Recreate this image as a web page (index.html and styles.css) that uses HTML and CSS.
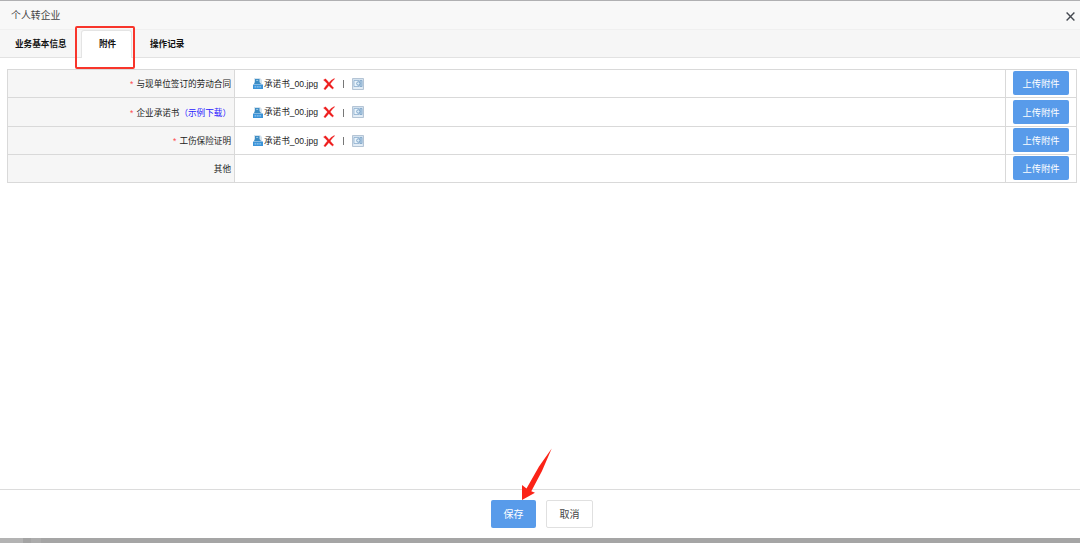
FILE: index.html
```
<!DOCTYPE html>
<html lang="en">
<head>
<meta charset="utf-8">
<title>个人转企业</title>
<link rel="stylesheet" href="styles.css">
</head>
<body>
<svg class="defs" width="0" height="0">
  <symbol id="file" viewBox="0 0 10 11">
    <path d="M1 0h6l2 2v5H1z" fill="#d5e3ee"/>
    <path d="M2 1h4.500v3l1.500 2H1l1-2z" fill="#3b8cc4"/>
    <path d="M3.200 2.400h2" stroke="#b9dcf4" stroke-width=".8"/>
    <path d="M0 6.500h10V11H0z" fill="#3b93d8"/>
    <path d="M1.500 8.800h7" stroke="#8fc6ef" stroke-width="1.200" stroke-dasharray="1.800 .600"/>
  </symbol>
  <symbol id="delete" viewBox="0 0 12 12">
    <path d="M.5 2 2.500.8Q5 3.400 6 4.700 8 1.800 11.300.5L11.600 1Q9 3 7.200 5.900 9 8 10.700 10L9.500 11Q7 9 5.900 7.500 4 10 2.300 11.700L.8 10.900Q2.500 8 4.500 5.900 2.500 3.500.5 2z" fill="#ee1c1c" stroke="#ee1c1c" stroke-width=".3"/>
  </symbol>
  <symbol id="preview" viewBox="0 0 12 12">
    <path d="M.5.500h11v11H.5z" fill="#d3e2ef" stroke="#b4c4d5"/>
    <path d="M2 2.500h5v6H2z" fill="#e9f3fa" stroke="#8fb0cf" stroke-width=".8"/>
    <path d="M8 2.500h2v6H8z" fill="#b5d0e6" stroke="#7fa5c8" stroke-width=".8"/>
    <circle cx="6.300" cy="5.500" r="1.700" fill="#d8ebf7" stroke="#7199c1" stroke-width=".8"/>
    <path d="M1.500 10h9" stroke="#f2f7fb"/>
  </symbol>
</svg>
<div class="dialog">
  <header class="titlebar">
    <span>个人转企业</span>
    <svg class="close" viewBox="0 0 9 9"><path d="M.6.600l7.800 7.800M8.400.600.6 8.400" stroke="#454950" stroke-width="1.400"/></svg>
  </header>
  <nav class="tabs">
    <div class="tab tab-info">业务基本信息</div>
    <div class="tab tab-active">附件<i class="tab-mark"></i></div>
    <div class="tab tab-log">操作记录</div>
  </nav>
  <main class="content">
    <div class="table">
      <div class="label"><b>*</b>与现单位签订的劳动合同</div>
      <div class="files"><svg class="file-icon"><use href="#file"/></svg><span class="name">承诺书_00.jpg</span><svg class="action-icon"><use href="#delete"/></svg><span class="bar"></span><svg class="action-icon"><use href="#preview"/></svg></div>
      <div class="upload"><button class="upload-btn">上传附件</button></div>
      <div class="label"><b>*</b>企业承诺书<a class="sample">（示例下载）</a></div>
      <div class="files"><svg class="file-icon"><use href="#file"/></svg><span class="name">承诺书_00.jpg</span><svg class="action-icon"><use href="#delete"/></svg><span class="bar"></span><svg class="action-icon"><use href="#preview"/></svg></div>
      <div class="upload"><button class="upload-btn">上传附件</button></div>
      <div class="label"><b>*</b>工伤保险证明</div>
      <div class="files"><svg class="file-icon"><use href="#file"/></svg><span class="name">承诺书_00.jpg</span><svg class="action-icon"><use href="#delete"/></svg><span class="bar"></span><svg class="action-icon"><use href="#preview"/></svg></div>
      <div class="upload"><button class="upload-btn">上传附件</button></div>
      <div class="label">其他</div>
      <div class="files"></div>
      <div class="upload"><button class="upload-btn">上传附件</button></div>
    </div>
  </main>
  <footer class="footer">
    <button class="btn save">保存</button>
    <button class="btn cancel">取消</button>
    <svg class="arrow" viewBox="0 0 32 54"><path d="M30.700 1.500 18 19.500 5.500 41.500 1 38V53L14 45.800 10.300 44.300 21 24z" fill="#fb2418"/></svg>
  </footer>
</div>
<div class="backdrop"><span></span><span></span><span></span></div>
</body>
</html>
```
FILE: styles.css
```
* { box-sizing: border-box; }
body {
  margin: 0;
  height: 543px;
  display: flex;
  flex-direction: column;
  overflow: hidden;
  background: #fff;
  color: #222;
  font: 8.6px/12px "Liberation Sans", "Noto Sans CJK SC", sans-serif;
}
button { font-family: inherit; padding: 0; border: 0; white-space: nowrap; }
.defs { position: absolute; }
.dialog {
  height: 538px;
  border-top: 1px solid #b0b0b2;
  display: flex;
  flex-direction: column;
}
.titlebar {
  height: 29px;
  display: flex;
  align-items: center;
  justify-content: space-between;
  padding: 2px 5px 0 11px;
  background: #f8f8f8;
  border-bottom: 1px solid #f0f0f0;
  color: #444;
  font-size: 9.9px;
}
.close { width: 9px; height: 9px; margin-top: 1px; }
.tabs {
  height: 28px;
  display: flex;
  background: #f6f6f6;
  border-bottom: 1px solid #e2e2e2;
  color: #111;
  font-weight: 700;
}
.tab { display: flex; align-items: center; white-space: nowrap; }
.tab-info { width: 81px; padding-left: 15px; }
.tab-active {
  position: relative;
  width: 51px;
  height: 28px;
  padding: 0 0 1px 17px;
  background: #fff;
  border: 1px solid #e4e4e4;
  border-width: 1px 1px 0;
  border-radius: 3px 3px 0 0;
}
.tab-mark {
  position: absolute;
  left: -7px;
  top: -5px;
  width: 60px;
  height: 43px;
  border: 2px solid #f8352b;
  border-radius: 2px;
}
.tab-log { padding-left: 18px; }
.content { flex: 1; padding: 11px 3px 0 7px; }
.table {
  display: grid;
  grid-template-columns: 227px 771px 71px;
  grid-template-rows: 28px 29px 28px 28px;
  width: 1070px;
  height: 114px;
  border: 1px solid #d9d9d9;
  border-width: 1px 0 0 1px;
}
.table > div {
  display: flex;
  align-items: center;
  border: 1px solid #d9d9d9;
  border-width: 0 1px 1px 0;
}
.table .label { justify-content: flex-end; padding: 1px 3px 0 0; background: #f6f6f6; white-space: nowrap; }
.label b { color: #ff4a4a; margin-right: 3px; font-weight: 400; }
.sample { color: #2a20ff; }
.files { padding-left: 18px; }
.file-icon { width: 10px; height: 11px; margin-right: 1px; }
.name { width: 59px; white-space: nowrap; }
.action-icon { width: 12px; height: 12px; }
.bar { width: 1px; height: 8px; margin: 1px 8px 0; background: #777; }
.table .upload { justify-content: center; padding-bottom: 1px; }
.upload-btn {
  width: 56px;
  height: 24px;
  border-radius: 2px;
  background: #589bea;
  color: #fff;
  font-size: 9.3px;
}
.footer {
  position: relative;
  height: 49px;
  display: flex;
  justify-content: center;
  gap: 10px;
  padding: 10px 0 0 4px;
  border-top: 1px solid #dcdcdc;
}
.btn { height: 28px; padding-bottom: 1px; border-radius: 2px; font-size: 10px; }
.save { width: 45px; background: #589bea; color: #fff; }
.cancel { width: 47px; background: #fff; border: 1px solid #e0e0e0; color: #444; }
.arrow { position: absolute; left: 521px; top: -43px; width: 32px; height: 54px; }
.backdrop { flex: 1; display: flex; background: #a5a5a5; }
.backdrop span { width: 23px; background: #b3b3b3; }
.backdrop span + span { width: 8px; background: #a4a4a4; }
.backdrop span:last-child { width: 10px; background: #acacac; }
```
